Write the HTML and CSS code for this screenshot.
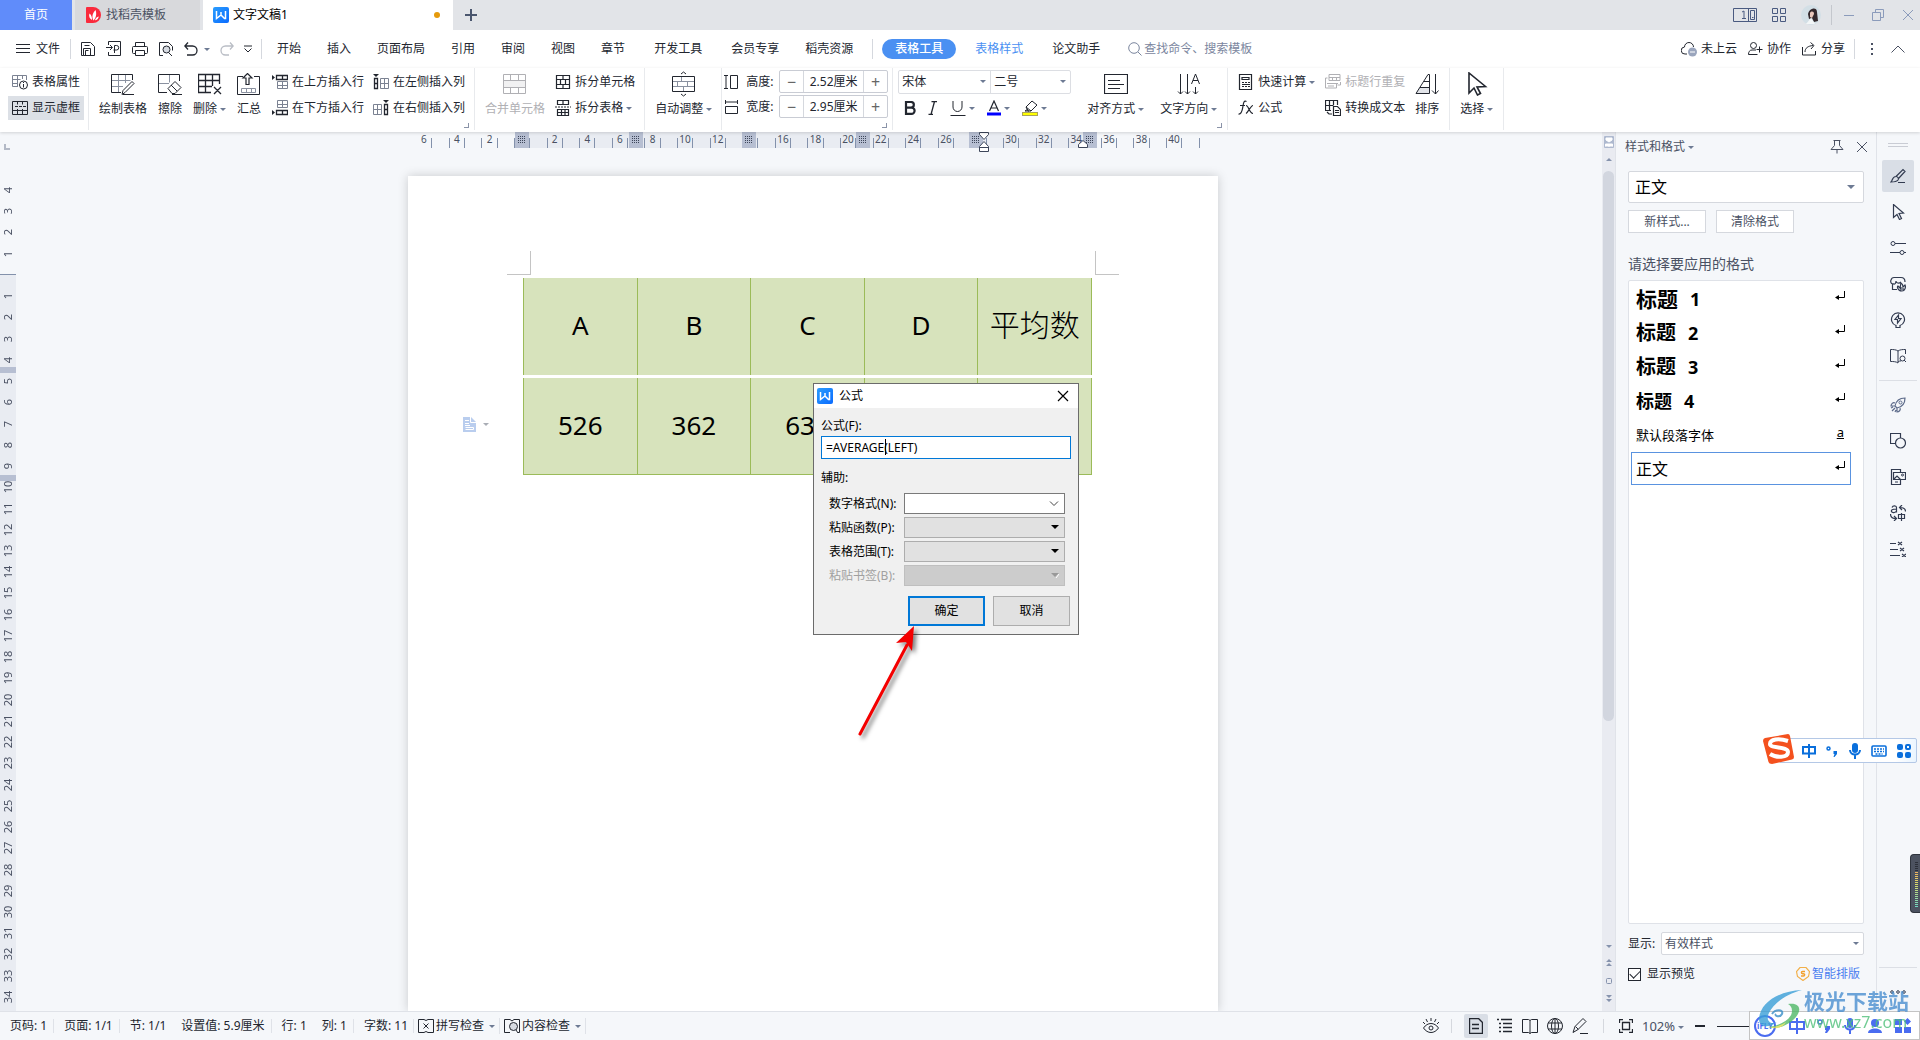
FILE: index.html
```html
<!DOCTYPE html>
<html lang="zh-CN">
<head>
<meta charset="utf-8">
<title>文字文稿1</title>
<link rel="stylesheet" href="styles.css">
</head>
<body>
<svg class="defs" aria-hidden="true">
  <defs>
    <linearGradient id="blue" x1="0" y1="0" x2="1" y2="1"><stop offset="0" stop-color="#2b9dfd"/><stop offset="1" stop-color="#0a6bff"/></linearGradient>
    <symbol id="wps" viewBox="0 0 16 16"><rect width="16" height="16" rx="2" fill="url(#blue)"/><path d="M3.500 4v7.500L8 8l3.500 3.500h1V4M8 8V5" fill="none" stroke="#fff" stroke-width="1.500"/></symbol>
    <symbol id="ret" viewBox="0 0 10 10"><path d="M9.500 0v6.500H1" fill="none" stroke="#000"/><path d="M0 6.500 4 4v5z" fill="#000"/></symbol>
  </defs>
</svg>

<header class="titlebar">
  <button class="tab home">首页</button>
  <button class="tab docer"><svg width="16" height="16" viewBox="0 0 16 16"><path d="M1 0h6a8 8 0 0 1 0 16H1a1 1 0 0 1-1-1V1a1 1 0 0 1 1-1z" fill="#fa2a3c"/><path d="M7.500 13.500C5.500 10 6.500 6 9.500 3c1.500 4 .5 8-2 10.500zM6 13C3.500 11.500 2.500 9 3.500 6.500 5.500 8 6.200 10.500 6 13zm3 .3c.3-1.800 1.500-3.300 3.800-3.800-.4 2.300-1.800 3.500-3.800 3.800z" fill="#fff"/></svg>找稻壳模板</button>
  <button class="tab current"><svg width="16" height="16"><use href="#wps"/></svg><span>文字文稿1</span><i class="unsaved"></i></button>
  <button class="newtab" aria-label="新建"><svg class="ic" width="12" height="12" viewBox="0 0 12 12"><path d="M6 0v12M0 6h12" stroke-width="2"/></svg></button>
  <div class="wincontrols">
    <svg class="ic" width="24" height="14" viewBox="0 0 24 14"><path d="M.5.500h23v13H.5zM17.500 2.500h4v9h-4zM15.500 .500v13M19 9.500h1.500M9 4l2-1v8M9 10.500h4"/></svg>
    <svg class="ic" width="14" height="14" viewBox="0 0 14 14"><path d="M.5.500h5v5h-5zM8.500.500h5v5h-5zM.5 8.500h5v5h-5zM8.500 8.500h5v5h-5z"/></svg>
    <svg width="20" height="20" viewBox="0 0 20 20"><circle cx="10" cy="10" r="10" fill="#d3dfe6"/><path d="M7 9c1-6 9-8 9-2l1 9-4 1-2-4-3 1z" fill="#33282c"/><path d="M9 8c1-2 4-2 4 1l-2 4-2-1z" fill="#e9c7bb"/><path d="M5 19l5-6 4 6z" fill="#f3f6f7"/></svg>
    <span class="vline tall"></span>
    <svg class="ic pale" width="10" height="12" viewBox="0 0 10 12"><path d="M0 6.500h10"/></svg>
    <svg class="ic pale" width="12" height="12" viewBox="0 0 12 12"><path d="M.5 3.500h8v8h-8zM3.500 3V.500h8v8H9"/></svg>
    <svg class="ic pale" width="12" height="12" viewBox="0 0 12 12"><path d="M1 1l10 10M11 1 1 11"/></svg>
  </div>
</header>

<nav class="menubar">
  <button class="filemenu"><svg class="ic" width="14" height="12" viewBox="0 0 14 12"><path d="M0 1.500h14M0 5.500h14M0 9.500h14"/></svg>文件</button>
  <span class="vline"></span>
  <div class="quick">
    <svg class="ic" width="16" height="16" viewBox="0 0 16 16"><path d="M3.500 14.500h-2v-13h9l4 4v9h-11v-7h7v7M4.500 4.500h5M5.500 14.500v-5h3"/></svg>
    <svg class="ic" width="16" height="16" viewBox="0 0 16 16"><path d="M2.500 4V.500h12v14h-12V11M0 6.500h6M4 4l2.500 2.500L4 9M8.500 12V4.500h2a2.200 2.200 0 0 1 0 4.500h-3"/></svg>
    <svg class="ic" width="16" height="16" viewBox="0 0 16 16"><path d="M3.500 5V1.500h9V5M3.500 12.500h-2a1 1 0 0 1-1-1v-5a1 1 0 0 1 1-1h13a1 1 0 0 1 1 1v5a1 1 0 0 1-1 1h-2M3.500 9.500h9v5h-9z"/></svg>
    <svg class="ic" width="16" height="16" viewBox="0 0 16 16"><path d="M5 14.500H1.500v-13h9l4 4v4M10 11l4 4"/><circle cx="8.500" cy="8.500" r="3.500" fill="#d7dbe2"/></svg>
    <span class="withcaret"><svg class="ic" width="14" height="14" viewBox="0 0 14 14"><path d="M4 .500.800 4 4 7.500M1 4h7.500a4.500 4.500 0 0 1 0 9H3" stroke-width="1.300"/></svg><i class="caret"></i></span>
    <svg class="ic faint" width="14" height="14" viewBox="0 0 14 14"><path d="m10 .500 3.200 3.500L10 7.500M13 4H5.500a4.500 4.500 0 0 0 0 9H9" stroke-width="1.300"/></svg>
    <svg class="ic" width="8" height="8" viewBox="0 0 8 8"><path d="M0 1h8M.5 3.500 4 7l3.500-3.500"/></svg>
  </div>
  <span class="vline"></span>
  <div class="menus">
    <a href="#">开始</a><a href="#">插入</a><a href="#">页面布局</a><a href="#">引用</a><a href="#">审阅</a><a href="#">视图</a><a href="#">章节</a><a href="#" class="wide">开发工具</a><a href="#">会员专享</a><a href="#">稻壳资源</a>
    <span class="vline"></span>
    <a href="#" class="pill">表格工具</a><a href="#" class="ctx">表格样式</a><a href="#" class="wide">论文助手</a>
    <span class="search"><svg class="ic" width="14" height="14" viewBox="0 0 14 14"><circle cx="6" cy="6" r="5.300"/><path d="m10 10 3.500 3.500"/></svg>查找命令、搜索模板</span>
  </div>
  <div class="account">
    <a href="#"><svg class="ic" width="16" height="15" viewBox="0 0 16 15"><path d="M6 12H4a3.500 3.500 0 0 1-.5-7 4.500 4.500 0 0 1 9 0"/><circle cx="11.500" cy="10" r="4.500" fill="#9aa5bd" stroke="none"/><path d="M9 10h5" stroke="#fff"/></svg>未上云</a>
    <a href="#"><svg class="ic" width="15" height="14" viewBox="0 0 15 14"><circle cx="5.500" cy="3.500" r="3"/><path d="M8 8H4C1.500 8 .500 10 .500 12.500h9M11.500 4.500v6M8.500 7.500h6"/></svg>协作</a>
    <a href="#"><svg class="ic" width="15" height="14" viewBox="0 0 15 14"><path d="M.5 5v8h13V9M3 10c0-4 3-6 8-6.500M8.500.500 12 3.500 9 7"/></svg>分享</a>
    <span class="vline"></span>
    <svg class="ic more" width="4" height="14" viewBox="0 0 4 14"><path d="M2 1v2M2 6v2M2 11v2" stroke-width="2"/></svg>
    <svg class="ic" width="14" height="8" viewBox="0 0 14 8"><path d="M.5 7.500 7 1l6.500 6.500"/></svg>
  </div>
</nav>

<section class="ribbon">
  <div class="group g-props">
    <div class="stack">
      <button class="small"><svg class="ic" width="16" height="16" viewBox="0 0 16 16"><path d="M6 12.500H.500V1.500h14V6M.5 5.500h8M.5 9.500H6M5.500 1.500v11M10.500 1.500V5" stroke="#7b8292"/><circle cx="11.500" cy="11" r="4" fill="#fff"/><path d="M11.500 10v3.500M11.500 8v1"/></svg>表格属性</button>
      <button class="small on"><svg class="ic" width="16" height="16" viewBox="0 0 16 16"><path d="M.5 1.500h15v13H.500zM.5 10.500h15M5.500 1.500v3M10.500 1.500v3M5.500 9v6M10.500 9v6M3 6.500h3M7 6.500h3M11 6.500h3"/></svg>显示虚框</button>
    </div>
  </div>
  <div class="group g-insert">
    <button class="large"><span class="pic"><svg class="ic" width="24" height="22" viewBox="0 0 24 22"><path d="M.5 7.500h19M.5 13.500H12M7.500 1.500v18M14.500 1.500V10" stroke="#8a91a0"/><path d="M10 19.500H.500V1.500h21V7M11 21.500l1-4 9-9 2 2-9 9zM12 21.500h11"/></svg></span><span>绘制表格</span></button>
    <button class="large"><span class="pic"><svg class="ic" width="24" height="22" viewBox="0 0 24 22"><path d="M.5 10.500H11M11.500 1.500v8" stroke="#8a91a0"/><path d="M9 19.500H.500V1.500h21V8M10 15.500l7-7 6 6-6 6h-3zM13 12l6 6M14 21.500h10"/></svg></span><span>擦除</span></button>
    <button class="large"><span class="pic"><svg class="ic" width="24" height="22" viewBox="0 0 24 22"><path d="M13 19.500H.500V1.500h21V11M.5 7.500h21M.5 13.500H14M7.500 1.500v18M14.500 1.500V13M16 14l7 7M23 14l-7 7" stroke-width="1.300"/></svg></span><span>删除<i class="caret"></i></span></button>
    <button class="large"><span class="pic"><svg class="ic" width="24" height="22" viewBox="0 0 24 22"><path d="M6 3.500H.500v18h22v-18H17"/><path d="M4.500 15.500h14v4h-14zM9.500 15.500v4M14.500 15.500v4" stroke="#8a91a0"/><path d="M9 11.500V5H6l4.500-4.500L15 5h-3v6.500z" stroke-width="1.200"/></svg></span><span>汇总</span></button>
    <div class="stack">
      <button class="small"><svg class="ic" width="16" height="16" viewBox="0 0 16 16"><path d="M5.500 7.500h10v7h-10zM5.500 11.500h10M10.500 7.500v7" stroke="#7b8292"/><path d="M4.500 1.500h11v4h-11zM10.500 1.500v4" stroke-width="1.300"/><path d="M0 1l3 2.500L0 6z" fill="currentColor" stroke="none"/></svg>在上方插入行</button>
      <button class="small"><svg class="ic" width="16" height="16" viewBox="0 0 16 16"><path d="M5.500.500h10v7h-10zM5.500 4.500h10M10.500.500v7" stroke="#7b8292"/><path d="M4.500 10.500h11v4h-11zM10.500 10.500v4" stroke-width="1.300"/><path d="M0 10l3 2.500L0 15z" fill="currentColor" stroke="none"/></svg>在下方插入行</button>
    </div>
    <div class="stack">
      <button class="small"><svg class="ic" width="16" height="16" viewBox="0 0 16 16"><path d="M7.500 4.500h8v10h-8zM7.500 9.500h8M11.500 4.500v10" stroke="#7b8292"/><path d="M1.500 4.500h3v10h-3zM1.500 9.500h3" stroke-width="1.300"/><path d="M0 0h6L3 3z" fill="currentColor" stroke="none"/></svg>在左侧插入列</button>
      <button class="small"><svg class="ic" width="16" height="16" viewBox="0 0 16 16"><path d="M.5 4.500h8v10h-8zM.5 9.500h8M4.500 4.500v10" stroke="#7b8292"/><path d="M11.500 4.500h3v10h-3zM11.500 9.500h3" stroke-width="1.300"/><path d="M10 0h6l-3 3z" fill="currentColor" stroke="none"/></svg>在右侧插入列</button>
    </div>
    <i class="corner"></i>
  </div>
  <div class="group g-merge">
    <button class="large" disabled><span class="pic"><svg class="ic" width="24" height="22" viewBox="0 0 24 22"><path d="M.5 7.500h22v7H.500z" fill="#f1f1f2"/><path d="M.5 1.500h22v19H.500zM7.500 1.500v6M15.500 1.500v6M7.500 14.500v6M15.500 14.500v6"/></svg></span><span>合并单元格</span></button>
    <div class="stack">
      <button class="small"><svg class="ic" width="16" height="16" viewBox="0 0 16 16"><path d="M1.500 1.500h13v13h-13zM1.500 5.500h13M1.500 10.500h13M8 1.500v4M5.500 5.500v5M10.500 5.500v5M8 10.500v4" stroke-width="1.200"/></svg>拆分单元格</button>
      <button class="small"><svg class="ic" width="16" height="16" viewBox="0 0 16 16"><path d="M2.500 4.500v-4h11v4zM8 .500v4M2.500 9.500h11v6h-11zM2.500 12.500h11M6.500 9.500v6M10 9.500v6" stroke-width="1.200"/><path d="M0 7h16" stroke-dasharray="2 1"/></svg>拆分表格<i class="caret"></i></button>
    </div>
  </div>
  <div class="group g-auto">
    <button class="large"><span class="pic"><svg class="ic" width="24" height="26" viewBox="0 0 24 26"><path d="M.5 10.500h22M.5 15.500h22M9.500 5.500v5M5.500 10.500v5M15.500 10.500v5M11.500 15.500v5" stroke="#8a91a0"/><path d="M.5 5.500h22v15H.500zM9 3l2.500-2L14 3M9 23l2.500 2L14 23"/></svg></span><span>自动调整<i class="caret"></i></span></button>
  </div>
  <div class="group g-size">
    <div class="stack">
      <div class="sizer"><svg class="ic" width="16" height="16" viewBox="0 0 16 16"><path d="M0 1.500h4M2 1.500v13M0 14.500h4M6.500 1.500h7v13h-7z"/></svg><label for="h">高度:</label><span class="spin"><button>−</button><input id="h" value="2.52厘米"><button>+</button></span></div>
      <div class="sizer"><svg class="ic" width="16" height="16" viewBox="0 0 16 16"><path d="M1.500 1v4M1.500 3h12M13.500 1v4M1.500 7.500h12v7h-12z"/></svg><label for="w">宽度:</label><span class="spin"><button>−</button><input id="w" value="2.95厘米"><button>+</button></span></div>
    </div>
    <i class="corner"></i>
  </div>
  <div class="group g-font">
    <div class="stack">
      <div class="combos"><span class="select fontname"><select aria-label="字体"><option>宋体</option></select></span><span class="select fontsize"><select aria-label="字号"><option>二号</option></select></span></div>
      <div class="formats">
        <button aria-label="加粗"><svg class="ic" width="12" height="14" viewBox="0 0 12 14"><path d="M2 1h5a2.800 2.800 0 0 1 0 5.700H2zM2 6.700h5.500a3 3 0 0 1 0 6.200H2z" stroke-width="2.200"/></svg></button>
        <button aria-label="倾斜"><svg class="ic" width="10" height="14" viewBox="0 0 10 14"><path d="M3.500.500H9M.5 13.500H5M6.500.500l-3.500 13" stroke-width="1.300"/></svg></button>
        <button aria-label="下划线"><svg class="ic" width="16" height="16" viewBox="0 0 16 16"><path d="M3 1v6a4.500 4.500 0 0 0 9 0V1M.5 15.500h15"/></svg><i class="caret"></i></button>
        <button aria-label="字体颜色"><svg class="ic" width="14" height="16" viewBox="0 0 14 16"><path d="M2.500 11 7 1l4.500 10M4 8h6" stroke-width="1.200"/><path d="M0 14h14" stroke="#00f" stroke-width="3"/></svg><i class="caret"></i></button>
        <button aria-label="突出显示"><svg class="ic" width="16" height="16" viewBox="0 0 16 16"><path d="m4 7 6-6 5 4-6 6H6zM4 7l5 4M6 9l-3 2h4"/><rect x=".5" y="12.500" width="15" height="3" fill="#ff0" stroke="#aaa45a"/></svg><i class="caret"></i></button>
      </div>
    </div>
    <button class="large"><span class="pic"><svg class="ic" width="24" height="22" viewBox="0 0 24 22"><path d="M.5 1.500h23v19H.500zM4 7.500h12M4 11.500h16M4 15.500h12" stroke-width="1.200"/></svg></span><span>对齐方式<i class="caret"></i></span></button>
    <button class="large"><span class="pic"><svg class="ic" width="24" height="24" viewBox="0 0 24 24"><path d="M3.500 2v20M1 19.500 3.500 22 6 19.500M10.500 2v20M8 19.500l2.500 2.500 2.500-2.500M18.500 15v7M16 19.500l2.500 2.500 2.500-2.500M14.500 12 18.500 2l4 10M16 8.500h5"/></svg></span><span>文字方向<i class="caret"></i></span></button>
    <i class="corner"></i>
  </div>
  <div class="group g-calc">
    <div class="stack">
      <button class="small"><svg class="ic" width="16" height="16" viewBox="0 0 16 16"><path d="M1.500.500h12v15h-12zM4 3.500h7v2H4zM4 8.500h2M7 8.500h2M10 8.500h2M4 12.500h2M7 12.500h2M10 12.500h2M4 10.500h8" stroke-width="1.200"/></svg>快速计算<i class="caret"></i></button>
      <button class="small"><svg class="ic" width="16" height="16" viewBox="0 0 16 16"><path d="M8.500 1.500C6 0 5.500 3 5 6s-1 8.500-4.500 8M2 5.500h5M8 5.500c3 0 3 8 7 8M15 5.500c-2 0-5 7-7 8" stroke-width="1.200"/></svg>公式</button>
    </div>
    <div class="stack">
      <button class="small" disabled><svg class="ic" width="16" height="16" viewBox="0 0 16 16"><path d="M4 6.500V.500h11v6zM4 3.500h11M7.500 3.500v3M11.500 3.500v3M2.500 4H.500v10h11v-4M2 9.500h11M3 12h6M15.500 8v3h-3"/></svg>标题行重复</button>
      <button class="small"><svg class="ic" width="16" height="16" viewBox="0 0 16 16"><path d="M6 10.500H.500v-10h12V5M.5 5.500h8M4.500.500v10M8.500.500V5M8.500 6.500h4l3 3v6h-7zM10 10.500h4M10 12.500h4M2 12l2 2h3" stroke-width="1.200"/></svg>转换成文本</button>
    </div>
    <button class="large"><span class="pic"><svg class="ic" width="24" height="24" viewBox="0 0 24 24"><path d="M4 15.500h10v6H1z" fill="#e2e4e9" stroke="none"/><path d="M14.500 21.500H1L13 2.500h1.500zM9 9.500h5M5 15.500h9M20.500 2v20M17 18.500l3.500 3.500 3-3.500"/></svg></span><span>排序</span></button>
  </div>
  <div class="group g-pick">
    <button class="large"><span class="pic"><svg class="ic" width="24" height="24" viewBox="0 0 24 24"><path d="M4 1v20l5-5 3.500 7 3-1.500L12 15l8.500-.5z" stroke-width="1.600"/></svg></span><span>选择<i class="caret"></i></span></button>
  </div>
</section>

<main class="workspace">
  <section class="editor">
    <div class="hruler">
      <i class="origin"></i>
      <div class="scale">
        <ol>
          <li><b>6</b></li><li><b>4</b></li><li><b>2</b></li><li><b></b></li><li><b>2</b></li><li><b>4</b></li><li><b>6</b></li><li><b>8</b></li><li><b>10</b></li><li><b>12</b></li><li><b></b></li><li><b>16</b></li><li><b>18</b></li><li><b>20</b></li><li><b>22</b></li><li><b>24</b></li><li><b>26</b></li><li><b></b></li><li><b>30</b></li><li><b>32</b></li><li><b>34</b></li><li><b>36</b></li><li><b>38</b></li><li><b>40</b></li><li><b></b></li>
        </ol>
        <div class="stops"><i></i><i></i><i></i><i></i><i></i><i></i></div>
        <svg class="indent first" width="10" height="20" viewBox="0 0 10 20"><path d="M.5.500h9v2L5 7.500.500 2.500zM.5 19.500v-5L5 9.500l4.500 5v5zM.5 15.500h9" fill="#fff" stroke="#3d465a"/></svg>
        <svg class="indent right" width="10" height="8" viewBox="0 0 10 8"><path d="M.5 7.500v-3L5 .500l4.500 4v3z" fill="#fff" stroke="#3d465a"/></svg>
      </div>
    </div>
    <div class="pagearea">
      <ol class="vruler">
        <li>4</li><li>3</li><li>2</li><li>1</li><li></li><li>1</li><li>2</li><li>3</li><li>4</li><li>5</li><li>6</li><li>7</li><li>8</li><li>9</li><li>10</li><li>11</li><li>12</li><li>13</li><li>14</li><li>15</li><li>16</li><li>17</li><li>18</li><li>19</li><li>20</li><li>21</li><li>22</li><li>23</li><li>24</li><li>25</li><li>26</li><li>27</li><li>28</li><li>29</li><li>30</li><li>31</li><li>32</li><li>33</li><li>34</li>
      </ol>
      <div class="canvas">
        <article class="page">
          <div class="crops"><i class="crop left"></i><i class="crop rightmark"></i></div>
          <table class="sheet">
            <tr><td>A</td><td>B</td><td>C</td><td>D</td><td class="song">平均数</td></tr>
            <tr><td>526</td><td>362</td><td>634</td><td></td><td></td></tr>
          </table>
          <span class="pastemark"><svg width="13" height="15" viewBox="0 0 13 15"><path d="M0 0h8l5 5v10H0z" fill="#b9cdee"/><path d="M7.500 0v5.500H13M2 3.500h4M2 6.500h4M2 8.500h5M2.500 10.500h8v2h-8" fill="none" stroke="#fff"/></svg><i class="caret"></i></span>
          <form class="dialog">
            <header><svg width="16" height="16"><use href="#wps"/></svg><span>公式</span><button type="button" aria-label="关闭"><svg width="12" height="12" viewBox="0 0 12 12"><path d="m1 1 10 10M11 1 1 11" stroke="#000" stroke-width="1.200"/></svg></button></header>
            <label for="f">公式(F):</label>
            <div class="formula"><input id="f" value="=AVERAGE(LEFT)"><i class="cursor"></i></div>
            <p>辅助:</p>
            <div class="fields">
              <label for="n">数字格式(N):</label><span class="box white"><select id="n"><option></option></select><svg width="10" height="6" viewBox="0 0 10 6"><path d="m1 .500 4 4 4-4" fill="none" stroke="#444"/></svg></span>
              <label for="p">粘贴函数(P):</label><span class="box"><select id="p"><option></option></select><svg width="8" height="5" viewBox="0 0 8 5"><path d="M0 0h8L4 4z"/></svg></span>
              <label for="t">表格范围(T):</label><span class="box"><select id="t"><option></option></select><svg width="8" height="5" viewBox="0 0 8 5"><path d="M0 0h8L4 4z"/></svg></span>
              <label for="b" class="off">粘贴书签(B):</label><span class="box dim"><select id="b" disabled><option></option></select><svg width="8" height="5" viewBox="0 0 8 5"><path d="M5 5l3-4" stroke="#fff"/><path d="M0 0h8L4 4z" fill="#999"/></svg></span>
            </div>
            <footer><button type="button" class="ok">确定</button><button type="button">取消</button></footer>
          </form>
          <svg class="arrow" width="80" height="130" viewBox="0 0 80 130"><path d="M11 111 58 22" stroke="#f40000" stroke-width="3" stroke-linecap="round"/><path d="M65 3 47 20l10-1 6 9z" fill="#f40000"/></svg>
        </article>
      </div>
    </div>
  </section>

  <div class="scroller">
    <svg width="10" height="12" viewBox="0 0 10 12"><rect width="10" height="12" rx="1" fill="#aeb9cf"/><path d="M2 2h6v2L5 6 2 4zM1.500 10.500V8h7v2.500M5 8v3" fill="#fff" stroke="#fff"/></svg>
    <i class="tri up"></i>
    <div class="track"><i></i></div>
    <i class="tri"></i>
    <svg width="6" height="8" viewBox="0 0 6 8"><path d="M0 3l3-3 3 3zM0 7l3-3 3 3z" fill="#8693ad"/></svg>
    <svg width="6" height="6" viewBox="0 0 6 6"><rect x=".5" y=".5" width="5" height="5" rx="1" fill="none" stroke="#8693ad"/></svg>
    <svg width="6" height="8" viewBox="0 0 6 8"><path d="M0 0l3 3 3-3zM0 4l3 3 3-3z" fill="#8693ad"/></svg>
  </div>

  <aside class="panel">
    <header><span>样式和格式<i class="caret"></i></span><svg class="ic" width="14" height="14" viewBox="0 0 14 14"><path d="M3.500.500h7M4.500.500v5l-3.500 4h12l-3.500-4v-5M7 9.500v4"/></svg><svg class="ic" width="12" height="12" viewBox="0 0 12 12"><path d="m1 1 10 10M11 1 1 11"/></svg></header>
    <span class="select current-style"><select aria-label="当前样式"><option>正文</option></select></span>
    <div class="actions"><button>新样式...</button><button>清除格式</button></div>
    <h2>请选择要应用的格式</h2>
    <ul class="styles">
      <li class="s1"><span>标题</span><span>1</span><svg width="10" height="10"><use href="#ret"/></svg></li>
      <li class="s2"><span>标题</span><span>2</span><svg width="10" height="10"><use href="#ret"/></svg></li>
      <li class="s2"><span>标题</span><span>3</span><svg width="10" height="10"><use href="#ret"/></svg></li>
      <li class="s4"><span>标题</span><span>4</span><svg width="10" height="10"><use href="#ret"/></svg></li>
      <li class="s5"><span>默认段落字体</span><u>a</u></li>
      <li class="s6"><span>正文</span><svg width="10" height="10"><use href="#ret"/></svg></li>
    </ul>
    <div class="show"><label for="v">显示:</label><span class="select"><select id="v"><option>有效样式</option></select></span></div>
    <div class="preview"><input type="checkbox" id="pv" checked><label for="pv">显示预览</label><a href="#"><svg width="14" height="14" viewBox="0 0 14 14"><path d="M4 .500h6l3.500 4-1 5L7 13.500l-5.500-4-1-5z" fill="none" stroke="#f2b04a" stroke-width="1.200"/><path d="M9 4.500H6.500a1 1 0 0 0 0 2.200h1a1 1 0 0 1 0 2.300H5" fill="none" stroke="#f2a02c" stroke-width="1.400"/></svg>智能排版</a></div>
  </aside>

  <aside class="rail">
    <i class="grip"></i>
    <button class="on"><svg class="ic" width="16" height="16" viewBox="0 0 16 16"><path d="M6 8.500 13 1.500l2 2-6.500 7M6 8.500c2 0 3 2 2 3.500-1.500 2-4 2-7 2 1.500-1 1-5.500 5-5.500zM8 14.500h7" stroke-width="1.200"/></svg></button>
    <button><svg class="ic" width="16" height="16" viewBox="0 0 16 16"><path d="M3.500.500v13l3.500-3 2.500 5 2-1-2.500-5 4.500-.5z" stroke-width="1.200"/></svg></button>
    <button><svg class="ic" width="16" height="16" viewBox="0 0 16 16"><circle cx="3" cy="3.500" r="2"/><circle cx="12" cy="12.500" r="2"/><path d="M5 3.500h11M0 12.500h10M14 12.500h2" stroke-width="1.200"/></svg></button>
    <button><svg class="ic" width="16" height="16" viewBox="0 0 16 16"><path d="M7 13.500H2.500V8C.5 7.500.500 5 1 4c.5-2 1.500-2.500 3-2.500h7c2 0 4 1 4 4.500M2.500 7.500C5 9 6 7 6 5c0 2 3 3 5 1M9 14c-1-1-2-3-1-4l2 2 1-5c2 1 2 3 2 4l2-2c1 2 0 6-3 6-1 0-2 0-3-1zm2 0v-3m2 3v-2" stroke-width="1.200"/></svg></button>
    <button><svg class="ic" width="16" height="16" viewBox="0 0 16 16"><path d="M6 15.500v-2A6.500 6.500 0 1 1 10 13.500v2zM8.500 3 5 7.500h2.500V11L11 6.500H8.500z" stroke-width="1.200"/></svg></button>
    <button><svg class="ic" width="16" height="16" viewBox="0 0 16 16"><path d="M8 3C6 1.500 3 1.500.500 1.500v12c3 0 5.500 0 7.500 1.500V3c2-1.500 5-1.500 7.500-1.500V6M8 14c1-1 2-1 3-1"/><circle cx="12.500" cy="10.500" r="2.500"/><path d="m14 12 2 2"/></svg></button>
    <hr>
    <button><svg class="ic soft" width="16" height="16" viewBox="0 0 16 16"><path d="M5 9c1-5 5-8 10-8 0 5-3 9-8 10zM5 6C3 5 1 7 1 9h4M10 11c1 2-1 4-3 4v-4M1 11l2-1M2 14l3-3M5 15l1-2" stroke-width="1.200"/><circle cx="10.500" cy="5.500" r="1.500"/></svg></button>
    <button><svg class="ic" width="16" height="16" viewBox="0 0 16 16"><path d="M6 10.500H.500V.500h10V5" stroke-width="1.200"/><circle cx="10.500" cy="10" r="5" stroke-width="1.200"/></svg></button>
    <button><svg class="ic" width="16" height="16" viewBox="0 0 16 16"><path d="M10.500 3V.500h-9v15h9V11M3.500 3.500h12v7h-12zM4 10l3-3 3.500 3.500M5 13h3" stroke-width="1.200"/><circle cx="12.500" cy="6" r="1"/></svg></button>
    <button><svg class="ic" width="16" height="16" viewBox="0 0 16 16"><path d="M2 2.500C3 0 6.500.500 6.500 2.500v5M6.500 4C2 4 1 5 1.500 6.500c.5 1.500 4 1.500 5-.500M12 0 9.500 2.500 12 5M10 2.500c4 0 5.500 1 5.500 4M.5 9c0 3 1.500 4.500 5.500 4.500M4 11l2.500 2.500L4 16M8.500 9.500h6v4h-6zM11.500 8v8" stroke-width="1.200"/></svg></button>
    <button><svg class="ic" width="16" height="16" viewBox="0 0 16 16"><path d="M0 2.500h6M0 8.500h8M0 14.500h10M8 1l4 3M12 1 8 4M10 7l4 3M14 7l-4 3M12 13l4 3M16 13l-4 3" stroke-width="1.200"/></svg></button>
    <hr class="low">
    <svg class="ic dots" width="16" height="4" viewBox="0 0 16 4"><circle cx="2" cy="2" r="1.300"/><circle cx="8" cy="2" r="1.300"/><circle cx="14" cy="2" r="1.300"/></svg>
  </aside>
</main>

<footer class="status">
  <span>页码: 1</span><span>页面: 1/1</span><span>节: 1/1</span><span class="plain">设置值: 5.9厘米</span><span>行: 1</span><span class="plain">列: 1</span><span class="count">字数: 11</span>
  <button><svg class="ic" width="16" height="16" viewBox="0 0 16 16"><path d="M6 1.500H.500v13H6l2-1 2 1h5.500v-13H10l-2 1zM5.500 5.500l5 5M10.500 5.500l-5 5"/></svg>拼写检查<i class="caret"></i></button>
  <button><svg class="ic" width="16" height="16" viewBox="0 0 16 16"><path d="M6 1.500H.500v13H6M10 1.500h5.500v13H14M10 1.500 8 3 6 1.500M12 12l2 3"/><circle cx="9.500" cy="8.500" r="4" fill="#d7dbe2"/></svg>内容检查<i class="caret"></i></button>
  <div class="views">
    <svg class="ic" width="16" height="16" viewBox="0 0 16 16"><circle cx="8" cy="10" r="2"/><path d="M.5 10c4-6 11-6 15 0-4 6-11 6-15 0zM8 0v3M3 1l1.500 3M13 1l-1.500 3M0 4l2 2M16 4l-2 2"/></svg>
    <span class="bar"></span>
    <button class="on"><svg class="ic" width="14" height="16" viewBox="0 0 14 16"><path d="M.5.500h9l4 4v11H.500zM3 6.500h7M3 10.500h7" stroke-width="1.400"/></svg></button>
    <svg class="ic" width="16" height="16" viewBox="0 0 16 16"><path d="M0 1.500h2M4 1.500h11M2 5.500h2M6 5.500h9M2 9.500h2M6 9.500h9M2 13.500h2M6 13.500h9" stroke-width="1.300"/></svg>
    <svg class="ic" width="16" height="16" viewBox="0 0 16 16"><path d="M8 2.500 6.500 1.500H.500v13h6l1.500 1 1.500-1h6v-13h-6zM8 2.500v13"/></svg>
    <svg class="ic" width="16" height="16" viewBox="0 0 16 16"><circle cx="8" cy="8" r="7.500"/><ellipse cx="8" cy="8" rx="3.500" ry="7.500"/><path d="M1 5h14M1 11h14M8 .500v15"/></svg>
    <svg class="ic" width="16" height="16" viewBox="0 0 16 16"><path d="m1 14.500 2-6 8-8 3 3-8 8zM3.500 8.500l3 3M8 15.500h8"/></svg>
    <span class="bar far"></span>
    <svg class="ic" width="14" height="14" viewBox="0 0 14 14"><path d="M.5 4V.500H4M10 .500h3.500V4M13.500 10v3.500H10M4 13.500H.500V10M3.500 3.500h7v7h-7z" stroke-width="1.300"/></svg>
    <span class="zoom">102%<i class="caret"></i></span>
    <svg class="ic" width="10" height="4" viewBox="0 0 10 4"><path d="M0 2h10" stroke-width="2"/></svg>
    <svg class="ic" width="35" height="4" viewBox="0 0 35 4"><path d="M3 2.500h32"/></svg>
  </div>
</footer>

<div class="sogou">
  <svg class="slogo" width="32" height="30" viewBox="0 0 32 30"><path d="M2 4 25 0q1.500 0 2 2l4 21q0 2-2 2.500L9 30q-3 0-3.500-2L0 7q0-2.500 2-3z" fill="#f4511e"/><path d="M25 7c-9-3-18-2-18 3s18 2 18 8-12 6-18 2" fill="none" stroke="#fff" stroke-width="4"/></svg>
  <svg width="14" height="14" viewBox="0 0 14 14"><path d="M1 3h12v6.500H1zM7 0v14" fill="none" stroke="#0a6fdc" stroke-width="2"/></svg>
  <svg width="12" height="12" viewBox="0 0 12 12"><circle cx="2.500" cy="3.500" r="1.500" fill="none" stroke="#0a6fdc" stroke-width="1.500"/><path d="M7.500 6h3.500v3l-2.500 3H7.500l1-3h-1z" fill="#0a6fdc"/></svg>
  <svg width="12" height="16" viewBox="0 0 12 16"><rect x="3" width="6" height="10" rx="3" fill="#0a6fdc"/><path d="M1 7c0 6 10 6 10 0M6 12v4" fill="none" stroke="#0a6fdc" stroke-width="2"/></svg>
  <svg width="16" height="12" viewBox="0 0 16 12"><rect x="1" y="1" width="14" height="10" rx="1" fill="none" stroke="#0a6fdc" stroke-width="1.600"/><path d="M3 4h10M3 6.500h10M4.500 9h7" stroke="#0a6fdc" stroke-width="1.400" stroke-dasharray="2 1"/></svg>
  <svg width="14" height="14" viewBox="0 0 14 14"><rect width="6" height="6" rx="2" fill="#0a6fdc"/><rect y="8" width="6" height="6" rx="2" fill="#0a6fdc"/><rect x="8" y="8" width="6" height="6" rx="2" fill="#0a6fdc"/><rect x="9" y="1" width="4" height="4" rx="1" fill="none" stroke="#0a6fdc" stroke-width="2"/></svg>
</div>

<div class="meter"><i></i></div>

<div class="ifly">
  <svg width="22" height="22" viewBox="0 0 22 22"><circle cx="11" cy="11" r="10" fill="none" stroke="#4a6cf0" stroke-width="2"/><text x="11" y="14" text-anchor="middle">iFLY</text></svg>
  <svg width="16" height="16" viewBox="0 0 16 16"><path d="M1 4h14v7H1zM8 0v16" fill="none" stroke="#4a6cf0" stroke-width="2"/></svg>
  <svg width="14" height="14" viewBox="0 0 14 14"><circle cx="3" cy="3" r="2" fill="none" stroke="#4a6cf0" stroke-width="1.600"/><path d="M8 7h5v3l-3 4H8l1-3H8z" fill="#4a6cf0"/></svg>
  <svg width="12" height="16" viewBox="0 0 12 16"><rect x="3" width="6" height="10" rx="3" fill="#4a6cf0"/><path d="M1 7c0 6 10 6 10 0M6 12v4" fill="none" stroke="#4a6cf0" stroke-width="2"/></svg>
  <svg width="14" height="16" viewBox="0 0 14 16"><circle cx="7" cy="5" r="4" fill="#4a6cf0"/><path d="M0 15c0-6 14-6 14 0z" fill="#4a6cf0"/></svg>
  <svg width="16" height="16" viewBox="0 0 16 16"><path d="M0 1h7v6H0zM0 9h7v6H0zM9 9h7v6H9zM12.500 0 16 3.500 12.500 7 9 3.500z" fill="#4a6cf0"/></svg>
</div>

<div class="watermark">
  <svg width="46" height="42" viewBox="0 0 46 42"><path d="M1 30C2 14 20 2 44 1 28 5 16 14 11 24c-4 8 2 12 8 9-8 6-18 6-18-3z" fill="#3a9fd8"/><path d="M30 15c12-2 14 6 8 13-7 8-18 13-28 10 12-1 24-8 24-16 0-4-2-6-4-7z" fill="#4fb867"/><path d="M14 25c3-5 12-5 10 0-2 4-8 2-6 0" fill="none" stroke="#3a8fc8" stroke-width="2"/><path d="M12 38c6 0 12-2 16-5-2 5-10 8-16 5z" fill="#d9dc4a"/></svg>
  <div><b>极光下载站</b><span>www.xz7.com</span></div>
</div>
</body>
</html>
```
FILE: styles.css
```css
* { box-sizing: border-box; }
html, body { height: 100%; }
body {
  margin: 0;
  display: flex;
  flex-direction: column;
  overflow: hidden;
  position: relative;
  background: #f5f7fa;
  color: #22262f;
  font: 12px/16px "Noto Sans", "Noto Sans CJK SC", sans-serif;
}
button, input, select { font: inherit; color: inherit; margin: 0; padding: 0; border: 0; background: none; border-radius: 0; }
select { appearance: none; width: 100%; height: 100%; outline: 0; }
button { display: flex; align-items: center; justify-content: center; white-space: nowrap; }
a { color: inherit; text-decoration: none; }
ul, ol { list-style: none; margin: 0; padding: 0; }
svg { flex: none; display: block; }
.defs { position: absolute; width: 0; height: 0; }
.ic { fill: none; stroke: currentColor; }
.pale { color: #8b9bbb; }
.faint { color: #b9bdc5; }
.soft { color: #5d6b8a; }
.vline { width: 1px; height: 20px; background: #d5d8de; flex: none; }
.vline.tall { background: #c4c7cd; }
.caret { display: inline-block; flex: none; border: 3px solid transparent; border-top-color: #6d7a93; border-bottom: 0; margin-left: 3px; vertical-align: middle; }

/* title bar */
.titlebar { display: flex; height: 30px; flex: none; background: #e2e4e8; }
.tab { height: 30px; gap: 4px; justify-content: flex-start; margin-right: 3px; }
.home { width: 72px; background: #608cfa; color: #fff; justify-content: center; }
.docer { width: 125px; padding-left: 11px; background: #d8d9dc; color: #4b5263; }
.current { width: 250px; padding: 0 13px 0 10px; background: #fff; color: #000; margin: 0; }
.unsaved { width: 6px; height: 6px; border-radius: 3px; background: #e59a0c; margin-left: auto; }
.newtab { width: 36px; color: #4a566e; }
.wincontrols { display: flex; align-items: center; gap: 15px; margin-left: auto; padding-right: 6px; color: #4a5a80; }
.wincontrols .pale { margin-left: 3px; }
.wincontrols .tall { margin: 0 -6px 0 -5px; }

/* menu bar */
.menubar { display: flex; align-items: center; height: 38px; flex: none; background: #fff; }
.filemenu { gap: 6px; padding: 0 10px 0 16px; }
.quick { display: flex; align-items: center; gap: 10px; padding: 0 9px; }
.withcaret { display: flex; align-items: center; gap: 3px; }
.menus { display: flex; align-items: center; padding-left: 2px; }
.menus a { padding: 0 13px; white-space: nowrap; }
.menus .wide { padding: 0 16px; }
.menus .vline { margin: 0 9px 0 6px; }
.menus .pill { margin-right: 6px; line-height: 20px; border-radius: 10px; background: #4a90f2; color: #fff; font-weight: 500; }
.menus .ctx { color: #4a90f2; }
.search { display: flex; align-items: center; gap: 2px; margin-left: 12px; color: #7b869e; white-space: nowrap; }
.account { display: flex; align-items: center; gap: 11px; margin-left: auto; padding-right: 15px; color: #4a5163; }
.account a { display: flex; align-items: center; gap: 4px; white-space: nowrap; color: #22262f; }
.account .vline { margin: 0 4px 0 -2px; }
.account .more { margin-right: 6px; }

/* ribbon */
.ribbon { display: flex; height: 64px; flex: none; background: #fff; position: relative; z-index: 1; box-shadow: 0 1px 3px #00000026; }
.group { display: flex; align-items: flex-start; height: 62px; padding: 2px 10px 0; border-right: 1px solid #e8eaed; position: relative; flex: none; gap: 10px; }
.stack { display: flex; flex-direction: column; align-items: flex-start; gap: 2px; }
.small { height: 24px; gap: 4px; }
.small .caret { margin-left: -1px; }
.large { flex-direction: column; }
.large .pic { height: 28px; display: flex; align-items: center; }
.large > span:last-child { line-height: 22px; }
button:disabled { color: #b0b0b4; }
.corner { position: absolute; right: 5px; bottom: 2px; width: 5px; height: 5px; border: solid #8a93a8; border-width: 0 1px 1px 0; }
.g-props { padding: 2px 4px 0 8px; }
.g-props .small { padding: 0 4px; }
.g-props .on { background: #dce0e6; }
.g-insert { padding-right: 9px; gap: 11px; }
.g-insert .stack + .stack { margin-left: -2px; }
.g-merge { padding-right: 9px; }
.g-auto { padding-right: 9px; }
.g-size { padding: 2px 4px 0 2px; }
.sizer { display: flex; align-items: center; gap: 6px; height: 23px; }
.sizer label { width: 27px; white-space: nowrap; }
.spin { display: flex; width: 109px; height: 23px; border: 1px solid #c9ccd4; border-radius: 2px; }
.spin button { width: 23px; font-size: 16px; color: #666; }
.spin input { flex: 1; min-width: 0; text-align: center; border: solid #d5d8de; border-width: 0 1px; }
.g-font { padding: 2px 10px 0 5px; gap: 16px; }
.combos { display: flex; height: 24px; border: 1px solid #dcdee3; border-radius: 2px; }
.fontname { width: 92px; border-right: 1px solid #dcdee3; }
.fontsize { width: 79px; }
.select { position: relative; display: block; }
.select select { padding-left: 3px; }
.select::after { content: ""; position: absolute; right: 4px; top: 50%; margin-top: -2px; border: 3px solid transparent; border-top-color: #6d7a93; border-bottom: 0; pointer-events: none; }
.formats { display: flex; gap: 12px; height: 24px; padding-left: 6px; }

/* workspace */
.workspace { display: flex; flex: 1; min-height: 0; overflow: hidden; }
.editor { flex: 1; min-width: 0; display: flex; flex-direction: column; position: relative; }
.hruler { height: 16px; flex: none; display: flex; justify-content: center; padding-left: 24px; }
.origin { position: absolute; left: 4px; top: 12px; width: 6px; height: 6px; border: solid #b3b9c6; border-width: 0 0 2px 2px; }
.scale { width: 810px; position: relative; background: linear-gradient(90deg, transparent 114px, #e9ecf2 114px, #e9ecf2 688px, transparent 688px); }
.scale ol { width: 815px; display: grid; grid-template-columns: repeat(25, 1fr); height: 16px; align-items: end; justify-items: center; }
.scale b { display: block; width: 50%; height: 10px; border: solid #8391ab; border-width: 0 1px; font-weight: 400; font-size: 10px; line-height: 3px; text-align: center; color: #4a5163; }
.scale li { width: 100%; display: flex; justify-content: center; }
.scale li:first-child b { border-left: 0; }
.scale li:last-child b { border-right: 0; }
.stops { position: absolute; top: 0; left: 107px; width: 582px; display: flex; justify-content: space-between; }
.stops i { width: 14px; height: 16px; border: solid #b7bfd2; border-width: 4px 3px; background: repeating-linear-gradient(90deg, transparent 0 1px, #b7bfd2 1px 2px), repeating-linear-gradient(#3d465a 0 1px, #b7bfd2 1px 2px); }
.indent { position: absolute; }
.indent.first { left: 571px; top: 0; }
.indent.right { left: 670px; top: 8px; }
.pagearea { flex: 1; min-height: 0; display: flex; }
.vruler { width: 16px; margin-right: 8px; flex: none; display: flex; flex-direction: column; padding: 31px 0 4px; font-size: 11px; color: #4a5163;
  background:
    linear-gradient(#b7bfd2, #b7bfd2) 0 219px / 16px 6px no-repeat,
    linear-gradient(#b7bfd2, #b7bfd2) 0 327px / 16px 6px no-repeat,
    linear-gradient(transparent 126px, #8391ab 126px, #8391ab 127px, #e9ecf2 127px); }
.vruler li { flex: 1; min-height: 0; display: flex; align-items: center; writing-mode: vertical-rl; transform: rotate(180deg); line-height: 16px; justify-content: center; }
.canvas { flex: 1; min-width: 0; display: flex; justify-content: center; padding-top: 28px; overflow: hidden; }
.page { width: 810px; flex: none; position: relative; padding: 75px 115px 0; background: #fff; box-shadow: 0 0 10px #0000002e; }
.crops { display: flex; justify-content: space-between; margin: 0 -16px; height: 24px; }
.crop { width: 24px; border-bottom: 1px solid #c4c4c4; }
.crop.left { border-right: 1px solid #c4c4c4; }
.crop.rightmark { border-left: 1px solid #c4c4c4; }
.sheet { width: 569px; margin-top: 3px; table-layout: fixed; border-collapse: collapse; border: 1px solid #9bbb59; border-top: 0; color: #000; }
.sheet td { height: 98px; padding: 0 0 2px; text-align: center; font-size: 26px; line-height: 36px; background: #d7e3bc; border-left: 1px solid #9bbb59; }
.sheet tr + tr td { border-top: 3px solid #fff; }
.sheet .song { padding-bottom: 6px; font-family: "Noto Sans CJK SC", sans-serif; font-size: 30px; font-weight: 300; }
.pastemark { position: absolute; left: 55px; top: 241px; display: flex; align-items: center; gap: 4px; }
.pastemark .caret { border-top-color: #a9adb5; }

/* formula dialog */
.dialog { position: absolute; left: 405px; top: 207px; width: 266px; padding: 0 8px 8px 7px; background: #f0f0f0; border: 1px solid #6b6b6b; color: #000; display: flex; flex-direction: column; }
.dialog header { display: flex; align-items: center; gap: 6px; height: 24px; margin: 0 -8px 0 -7px; padding: 0 9px 0 3px; background: #fff; }
.dialog header button { margin-left: auto; }
.dialog > label { line-height: 16px; margin: 10px 0 2px; }
.formula { position: relative; height: 23px; }
.formula input { width: 250px; height: 23px; padding: 0 4px; background: #fff; border: 1px solid #0078d7; }
.cursor { position: absolute; left: 64px; top: 3px; width: 1px; height: 16px; background: #000; }
.dialog p { margin: 11px 0 7px; }
.fields { display: grid; grid-template-columns: 75px 161px; gap: 3px 0; padding-left: 8px; align-items: center; }
.box { position: relative; height: 21px; background: #e1e1e1; border: 1px solid #adadad; }
.box svg { position: absolute; right: 5px; top: 7px; pointer-events: none; }
.box.white { background: #fff; border-color: #7a7a7a; }
.box.dim { background: #ccc; border-color: #bfbfbf; }
.off { color: #a0a0a0; }
.dialog footer { display: flex; justify-content: flex-end; gap: 8px; margin-top: 10px; }
.dialog footer button { width: 77px; height: 30px; background: #e1e1e1; border: 1px solid #adadad; }
.dialog footer .ok { border: 2px solid #0078d7; }
.arrow { position: absolute; left: 441px; top: 447px; filter: drop-shadow(3px 3px 2px #00000080); }

/* scroll bar */
.scroller { width: 13px; flex: none; display: flex; flex-direction: column; align-items: center; padding: 4px 0 8px; background: #e9ebf1; }
.scroller .tri { border: 3px solid transparent; border-top-color: #8693ad; border-bottom: 0; margin-bottom: 11px; }
.scroller .tri.up { border: 3px solid transparent; border-bottom-color: #8693ad; border-top: 0; margin: 10px 0; }
.scroller .track { flex: 1; align-self: stretch; padding: 0 1px; }
.scroller .track i { display: block; height: 71%; border-radius: 6px; background: #d2d6df; }
.scroller svg + svg { margin-top: 11px; }

/* style panel */
.panel { width: 262px; flex: none; display: flex; flex-direction: column; padding: 0 12px 27px; border: solid #e0e3e9; border-width: 0 1px; }
.panel header { display: flex; align-items: center; gap: 12px; height: 30px; margin: 0 -4px 0 -3px; color: #4a5163; }
.panel header span { flex: 1; }
.panel .select { background: #fff; border: 1px solid #d5d8de; border-radius: 2px; }
.current-style { height: 32px; margin-top: 9px; font-size: 16px; color: #000; }
.current-style.select select { padding-left: 6px; }
.current-style.select::after { border-width: 4px 4px 0; right: 8px; }
.actions { display: flex; gap: 10px; margin-top: 7px; }
.actions button { width: 78px; height: 23px; border: 1px solid #d5d8de; background: #fff; color: #4a5163; }
.panel h2 { margin: 21px 0 6px; font-size: 14px; line-height: 20px; font-weight: 400; color: #4a5163; }
.styles { flex: 1; min-height: 0; padding: 1px 12px 0 2px; background: #fff; border: 1px solid #dfe2e8; border-radius: 2px; color: #000; font-weight: 700; }
.styles li { display: flex; align-items: center; gap: 12px; height: 34px; padding: 0 5px 0 4px; line-height: 32px; border: 1px solid transparent; }
.styles svg { margin: 0 0 6px auto; }
.styles u { margin: 0 1px 6px auto; }
.s1 { font-size: 21px; }
.s2 { font-size: 20px; }
.s4 { font-size: 18px; }
.s5 { font-size: 13px; font-weight: 400; }
.styles .s6 { font-size: 16px; font-weight: 400; border-color: #5a93e0; height: 33px; }
.s1 span + span, .s2 span + span, .s4 span + span { font-size: 18px; }
.show { display: flex; align-items: center; gap: 6px; margin-top: 8px; }
.show .select { flex: 1; height: 23px; color: #4a5163; }
.show label { width: 27px; white-space: nowrap; }
.preview { display: flex; align-items: center; gap: 6px; height: 20px; margin-top: 9px; }
.preview input { appearance: none; width: 13px; height: 13px; border: 1px solid #22262f; background: #fff; display: grid; place-items: center; }
.preview input::before { content: ""; width: 9px; height: 5px; border: solid #22262f; border-width: 0 0 1px 1px; rotate: -45deg; margin-bottom: 3px; }
.preview a { display: flex; align-items: center; gap: 2px; margin-left: auto; padding-right: 4px; color: #4a7df0; }

/* tool rail */
.rail { width: 43px; flex: none; display: flex; flex-direction: column; align-items: center; gap: 4px; padding: 11px 3px 17px 2px; color: #323b50; }
.grip { width: 20px; height: 4px; flex: none; border: solid #c9ccd4; border-width: 1px 0; margin-bottom: 9px; }
.rail button { width: 32px; height: 32px; flex: none; }
.rail .on { background: #d9dee6; border-radius: 2px; }
.rail hr { width: 38px; margin: 4px 0; border: 0; border-top: 1px solid #dcdfe5; flex: none; }
.rail .low { margin-top: auto; margin-bottom: 18px; }

/* status bar */
.status { display: flex; align-items: center; height: 29px; flex: none; border-top: 1px solid #dfe2e8; white-space: nowrap; }
.status > span, .status > button { padding: 0 6px 0 10px; border-right: 1px solid #dfe2e8; line-height: 14px; }
.status > span:nth-child(3), .status > span:nth-child(5) { border-right-color: transparent; padding-right: 4px; }
.status > .count { padding-right: 5px; }
.status > button { gap: 2px; padding: 0 4px; }
.views { display: flex; align-items: center; gap: 9px; margin-left: auto; padding-right: 171px; }
.views .bar { width: 1px; height: 14px; background: #d5d8de; margin: 0 3px; }
.views .far { margin: 0 6px; }
.views .on { width: 24px; height: 24px; background: #d9dee6; border-radius: 2px; }
.zoom { width: 44px; font-size: 13px; color: #4a5163; }

/* floating desktop widgets */
.sogou { position: absolute; right: 3px; top: 738px; width: 138px; height: 25px; padding: 0 5px 0 22px; display: flex; align-items: center; justify-content: space-between; background: linear-gradient(100deg, #fff 85%, #e8f4ff); border: 1px solid #b4c8e6; border-radius: 2px; }
.slogo { position: absolute; left: -17px; top: -5px; }
.meter { position: absolute; right: 0; top: 854px; width: 10px; height: 59px; padding: 7px 2px 5px 4px; background: #4c5260; border: 1px solid #2f343d; border-right: 0; border-radius: 4px 0 0 4px; }
.meter i { display: block; height: 45px; background: repeating-linear-gradient(transparent 0 1px, #4c5260 1px 2px), linear-gradient(#2b2f38 20%, #f0b35c 22%, #d8dc6c 50%, #6fd8c4); }
.ifly { position: absolute; right: 0; bottom: 0; width: 171px; height: 29px; padding: 0 8px 0 4px; display: flex; align-items: center; justify-content: space-between; background: #fff; border: 1px solid #c4c4c4; }
.ifly text { font-size: 8px; font-weight: 700; fill: #4a6cf0; }
.watermark { position: absolute; right: 11px; bottom: 9px; display: flex; align-items: flex-end; opacity: .8; }
.watermark div { display: flex; flex-direction: column; }
.watermark b { font-size: 21px; line-height: 24px; font-weight: 700; color: #4a8fd0; }
.watermark span { font-size: 16px; line-height: 18px; color: #4fc07a; }
```
